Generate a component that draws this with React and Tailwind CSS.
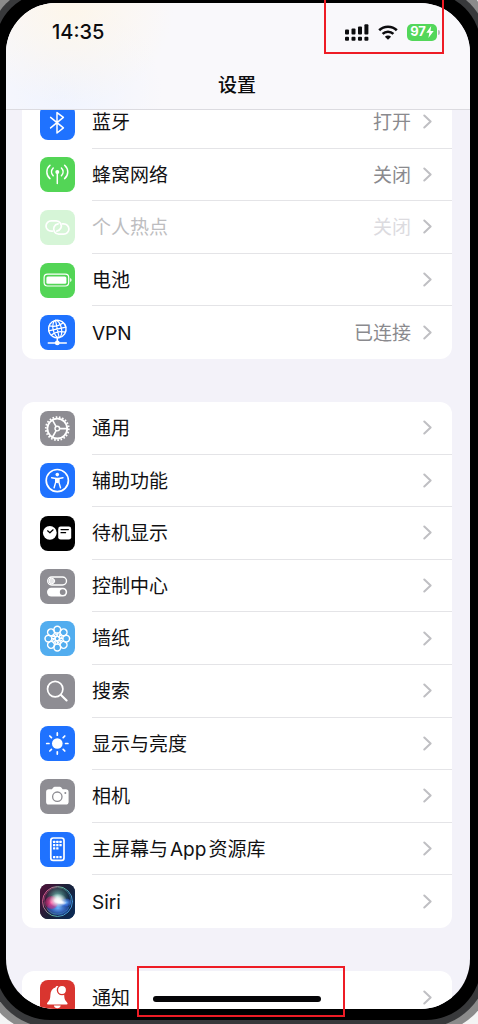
import React from "react";

// Each icon is drawn on a 35x35 tile
const Tile = ({ className, children }) => (
  <svg viewBox="0 0 35 35" className={`size-[35px] shrink-0 rounded-lg ${className}`} fill="none" stroke="white" strokeLinecap="round" strokeLinejoin="round" aria-hidden="true">
    {children}
  </svg>
);

const ANGLES = [0, 45, 90, 135, 180, 225, 270, 315];

const BluetoothIcon = () => (
  <Tile className="bg-[#1f72ff]">
    <path d="M10.6 12.4 23.4 22.9 17 28V7.6l6.4 4.8L10.6 22.9" strokeWidth="1.5" />
  </Tile>
);

const CellularIcon = () => (
  <Tile className="bg-[#53d556]">
    <circle cx="17.3" cy="15" r="2" fill="white" stroke="none" />
    <path d="M17.3 15v11.4M10 8.2c-4.2 3.8-4.2 9.6 0 13.4M24.6 8.2c4.2 3.8 4.2 9.6 0 13.4M13.2 11c-2.2 2.3-2.2 5.5 0 7.8M21.4 11c2.2 2.3 2.2 5.5 0 7.8" strokeWidth="1.5" />
  </Tile>
);

const HotspotIcon = () => (
  <Tile className="bg-[#d6f5d7]">
    <path d="M12.5 21.2h-1.3a5.2 5.2 0 0 1 0-10.4h5a5.2 5.2 0 0 1 4.6 7.4c-.8 1.7-2.2 2.6-4 2.9" strokeWidth="1.7" />
    <path d="M22.3 13.8h1.4a5.2 5.2 0 0 1 0 10.4h-5a5.2 5.2 0 0 1-4.6-7.4c.8-1.7 2.2-2.7 4-2.9" strokeWidth="1.7" />
  </Tile>
);

const BatteryIcon = () => (
  <Tile className="bg-[#53d556]">
    <rect x="4.1" y="11.2" width="24.6" height="11.8" rx="3.4" strokeWidth="1.2" />
    <rect x="6.4" y="13.4" width="20" height="7.4" rx="1.5" fill="white" stroke="none" />
    <path d="M30.2 15.1c1.8.8 1.8 3.2 0 4z" fill="white" stroke="none" />
  </Tile>
);

const VpnIcon = () => (
  <Tile className="bg-[#1f72ff]">
    <g strokeWidth="1.2" transform="rotate(-12 17.3 14)">
      <circle cx="17.3" cy="14" r="8.8" strokeWidth="1.4" />
      <ellipse cx="17.3" cy="14" rx="4.2" ry="8.8" />
      <path d="M17.3 5.2v17.6M8.5 14h17.6M10 9.2c4.4 2 10.2 2 14.6 0M10 18.8c4.4-2 10.2-2 14.6 0" />
    </g>
    <path d="M17.3 23v4M8.3 27.9h18" strokeWidth="1.5" />
    <circle cx="17.3" cy="27.9" r="2.4" fill="white" stroke="none" />
  </Tile>
);

const GeneralIcon = () => (
  <Tile className="bg-[#8e8d93]">
    <circle cx="17.3" cy="17.6" r="11.5" strokeWidth="1.8" strokeLinecap="butt" pathLength="44" strokeDasharray="1 1" />
    <circle cx="17.3" cy="17.6" r="9.9" strokeWidth="1.8" />
    <circle cx="17.3" cy="17.6" r="2.3" strokeWidth="1.4" />
    <path d="M19.8 17.6h7.2M16 15.4 12.5 9.2M16 19.8 12.5 26" strokeWidth="1.6" />
  </Tile>
);

const AccessibilityIcon = () => (
  <Tile className="bg-[#1f72ff]">
    <circle cx="17.3" cy="17.6" r="11.1" strokeWidth="1.7" />
    <circle cx="17.3" cy="11.6" r="1.8" fill="white" stroke="none" />
    <path d="M11.6 14.7l4.2.8h3l4.2-.8" strokeWidth="1.4" />
    <path d="M18.9 15.4v3.8l1.6 5.6M15.7 15.4v3.8l-1.6 5.6" strokeWidth="1.4" />
    <path d="M15.4 15h3.8v4.6l-1.9.6-1.9-.6z" fill="white" stroke="none" />
  </Tile>
);

const StandbyIcon = () => (
  <Tile className="bg-black">
    <circle cx="9.8" cy="16.8" r="6.9" fill="white" stroke="none" />
    <path d="M7.6 14.8l2.3 2 3.2-3" stroke="black" strokeWidth="1.2" />
    <rect x="18.2" y="10.6" width="13" height="13" rx="2.4" fill="white" stroke="none" />
    <path d="M21 13.6h7.4M21 16.7h4.6" stroke="black" strokeWidth="1.2" />
  </Tile>
);

const ControlCenterIcon = () => (
  <Tile className="bg-[#8e8d93]">
    <rect x="7.7" y="8" width="18.8" height="8" rx="4" strokeWidth="1.4" />
    <circle cx="11.8" cy="12" r="2.8" fill="#e6e6e8" strokeWidth="1" />
    <rect x="7" y="18.8" width="20.2" height="8.6" rx="4.3" fill="white" stroke="none" />
    <circle cx="22.7" cy="23.1" r="2.9" fill="#8e8d93" stroke="none" />
  </Tile>
);

const WallpaperIcon = () => (
  <Tile className="bg-[#52adef]">
    {ANGLES.map((a) => (
      <g key={a} transform={`rotate(${a} 17.3 17.6)`} strokeWidth="1.5">
        <circle cx="17.3" cy="8.7" r="3.4" />
        <path d="M17.3 12.1v3.4M15.3 12.9l3.4 2.8" strokeWidth="1.2" />
      </g>
    ))}
    <circle cx="17.3" cy="17.6" r="2.2" strokeWidth="1.2" />
  </Tile>
);

const SearchIcon = () => (
  <Tile className="bg-[#8e8d93]">
    <circle cx="15.2" cy="15.1" r="7.7" strokeWidth="1.7" />
    <path d="M21 20.9l5.6 5.6" strokeWidth="2.1" />
  </Tile>
);

const BrightnessIcon = () => (
  <Tile className="bg-[#1f72ff]">
    <circle cx="17.3" cy="17.5" r="5.3" fill="white" stroke="none" />
    {ANGLES.map((a) => (
      <path key={a} d="M17.3 6.9v2.3" strokeWidth="1.7" transform={`rotate(${a} 17.3 17.5)`} />
    ))}
  </Tile>
);

const CameraIcon = () => (
  <Tile className="bg-[#8e8d93]">
    <path d="M8.8 10.2h3.1l1.4-1.8c.4-.5.9-.7 1.5-.7h5c.6 0 1.1.2 1.5.7l1.4 1.8h3.1c1.7 0 2.8 1.1 2.8 2.7v10c0 1.6-1.1 2.700-2.800 2.700H8.800c-1.700 0-2.700-1.100-2.700-2.700v-10c0-1.600 1-2.700 2.700-2.700z" fill="white" stroke="none" />
    <circle cx="17.3" cy="17.7" r="4.7" stroke="#8e8d93" strokeWidth="1.3" />
    <circle cx="25.3" cy="14" r="1" fill="#8e8d93" stroke="none" />
  </Tile>
);

const HomeScreenIcon = () => (
  <Tile className="bg-[#1f72ff]">
    <rect x="10.8" y="6" width="13.2" height="22.4" rx="2.4" strokeWidth="1.7" />
    <g fill="white" stroke="none">
      {[[13, 8.8], [16.2, 8.8], [19.4, 8.8], [13, 12], [16.2, 12], [19.4, 12], [13, 15.2], [16.2, 15.2], [13, 24], [16.2, 24], [19.4, 24]].map(([x, y]) => (
        <rect key={`${x}-${y}`} x={x} y={y} width="2.3" height="2.3" rx="0.5" />
      ))}
    </g>
  </Tile>
);

const SiriIcon = () => (
  <Tile className="bg-[#17223a]">
    <defs>
      <linearGradient id="siri-bg" x1="0" y1="0.2" x2="1" y2="0.8">
        <stop offset="0" stopColor="#4a1238" />
        <stop offset="0.5" stopColor="#1b2138" />
        <stop offset="1" stopColor="#0b2a55" />
      </linearGradient>
      <linearGradient id="siri-ring" x1="0" y1="0.3" x2="1" y2="0.7">
        <stop offset="0" stopColor="#e0528c" />
        <stop offset="0.5" stopColor="#5fb59a" />
        <stop offset="1" stopColor="#3c8fe0" />
      </linearGradient>
      <radialGradient id="siri-pink">
        <stop offset="0" stopColor="#ff4f9a" />
        <stop offset="1" stopColor="#d02a7a" stopOpacity="0.45" />
      </radialGradient>
      <radialGradient id="siri-blue">
        <stop offset="0" stopColor="#6fb4ff" />
        <stop offset="1" stopColor="#2c66ee" stopOpacity="0.4" />
      </radialGradient>
      <radialGradient id="siri-teal">
        <stop offset="0" stopColor="#9af0e0" stopOpacity="0.8" />
        <stop offset="1" stopColor="#3fae8e" stopOpacity="0" />
      </radialGradient>
      <radialGradient id="siri-glow">
        <stop offset="0" stopColor="white" />
        <stop offset="0.35" stopColor="white" stopOpacity="0.85" />
        <stop offset="1" stopColor="white" stopOpacity="0" />
      </radialGradient>
    </defs>
    <rect width="35" height="35" fill="url(#siri-bg)" stroke="none" />
    <g stroke="none">
      <circle cx="17.5" cy="13" r="12" fill="url(#siri-teal)" />
      <ellipse cx="18" cy="24" rx="11" ry="7.5" fill="url(#siri-blue)" />
      <circle cx="11.5" cy="18.5" r="6.5" fill="url(#siri-pink)" />
      <ellipse cx="26" cy="18.5" rx="5.5" ry="4" fill="url(#siri-blue)" />
      <ellipse cx="18" cy="16.5" rx="9" ry="7" fill="url(#siri-glow)" />
      <ellipse cx="20" cy="18" rx="7" ry="2.5" fill="url(#siri-glow)" transform="rotate(14 20 18)" />
    </g>
    <circle cx="17.5" cy="17.5" r="15" stroke="url(#siri-ring)" strokeWidth="1" />
    <circle cx="17.5" cy="16.8" r="13.4" stroke="url(#siri-ring)" strokeWidth="0.6" opacity="0.7" />
  </Tile>
);

const BellIcon = () => (
  <Tile className="bg-[#d9352f]">
    <path d="M17.3 6c-1 0-1.7.7-1.900 1.600-3.300 1-4.900 3.900-5 7.400-.1 3.500-.6 5-2 6.500-.8.9-1.400 1.500-1.400 2.200 0 .5.400.8 1 .8h18.600c.6 0 1-.3 1-.8 0-.7-.6-1.300-1.400-2.200-1.400-1.500-1.900-3-2-6.500-.1-5-2.500-9-6.900-9z" fill="white" stroke="none" />
    <path d="M13.9 25.6h6.8c-.3 1.700-1.600 2.700-3.400 2.700s-3.100-1-3.400-2.700z" fill="white" stroke="none" />
    <circle cx="22" cy="10" r="4.6" fill="white" stroke="#d9352f" strokeWidth="1.4" />
  </Tile>
);

const network = [
  { id: "bluetooth", label: "蓝牙", value: "打开", Icon: BluetoothIcon },
  { id: "cellular", label: "蜂窝网络", value: "关闭", Icon: CellularIcon },
  { id: "hotspot", label: "个人热点", value: "关闭", Icon: HotspotIcon, disabled: true },
  { id: "battery", label: "电池", Icon: BatteryIcon },
  { id: "vpn", label: "VPN", value: "已连接", Icon: VpnIcon },
];

const general = [
  { id: "general", label: "通用", Icon: GeneralIcon },
  { id: "accessibility", label: "辅助功能", Icon: AccessibilityIcon },
  { id: "standby", label: "待机显示", Icon: StandbyIcon },
  { id: "control", label: "控制中心", Icon: ControlCenterIcon },
  { id: "wallpaper", label: "墙纸", Icon: WallpaperIcon },
  { id: "search", label: "搜索", Icon: SearchIcon },
  { id: "display", label: "显示与亮度", Icon: BrightnessIcon },
  { id: "camera", label: "相机", Icon: CameraIcon },
  { id: "home", label: <>主屏幕与<span className="mx-0.5">App</span>资源库</>, Icon: HomeScreenIcon },
  { id: "siri", label: "Siri", Icon: SiriIcon },
];

const alerts = [{ id: "alerts", label: "通知", Icon: BellIcon }];

const Row = ({ label, value, Icon, disabled, last }) => (
  <li className="flex">
    <a href="#" aria-disabled={disabled} className="flex flex-1 items-center gap-[17px] pl-[18px]">
      <Icon />
      <span className={`flex flex-1 items-center self-stretch pr-5 ${last ? "" : "border-b border-[#e4e4e7]"}`}>
        <span className={`flex-1 pt-[3px] ${disabled ? "text-[#bdbdc0]" : "text-[#111113]"}`}>{label}</span>
        {value && <span className={`pt-[3px] ${disabled ? "text-[#dcdbdf]" : "text-[#8a8a8e]"}`}>{value}</span>}
        <svg viewBox="0 0 9 15" className="ml-3 h-[15px] w-[9px]" fill="none" stroke="#bfbfc3" strokeWidth="2" strokeLinecap="round" strokeLinejoin="round" aria-hidden="true">
          <path d="M1.3 1.5 7.6 7.5 1.3 13.5" />
        </svg>
      </span>
    </a>
  </li>
);

const Group = ({ items, className }) => (
  <ul className={`grid auto-rows-fr rounded-xl bg-white ${className}`}>
    {items.map(({ id, ...item }, i) => (
      <Row key={id} {...item} last={i === items.length - 1} />
    ))}
  </ul>
);

const StatusBar = () => (
  <div className="flex h-[58px] items-center justify-between pl-[46px] pr-[30px]">
    <time className="text-xl font-medium text-[#0c0c0e]">14:35</time>
    <div className="flex items-center gap-[9px]">
      {/* signal, two lines */}
      <svg viewBox="0 0 24 17" className="h-[17px] w-6" fill="#0c0c0e" aria-label="信号">
        <rect x="0" y="5.6" width="4" height="4.8" rx="1" />
        <rect x="6.5" y="4.4" width="4" height="6" rx="1" />
        <rect x="13" y="2.4" width="4" height="8" rx="1" />
        <rect x="19.4" y="0.2" width="4" height="10.2" rx="1" />
        <rect x="0" y="12.7" width="4" height="4" rx="1" />
        <rect x="6.5" y="12.7" width="4" height="4" rx="1" />
        <rect x="13" y="12.7" width="4" height="4" rx="1" />
        <rect x="19.4" y="12.7" width="4" height="4" rx="1" />
      </svg>
      <svg viewBox="0 0 20 15" className="h-[15px] w-5" fill="none" stroke="#0c0c0e" strokeWidth="2.6" aria-label="无线局域网">
        <path d="M1.2 5.3a12.6 12.6 0 0 1 17.6 0M4.6 8.9a7.7 7.7 0 0 1 10.8 0" />
        <path d="M10 14.8 6.9 11.7a4.4 4.4 0 0 1 6.2 0z" fill="#0c0c0e" stroke="none" />
      </svg>
      <div className="flex items-center gap-px">
        <div className="flex h-[17px] w-[30px] items-center justify-center rounded-[5px] bg-[#53d75a] text-[13px] font-bold text-white">
          97
          <svg viewBox="0 0 8 12" className="h-3 w-2" fill="white" aria-hidden="true">
            <path d="M5.2 0 .3 6.700h3L2.400 12l5.300-7H4.500z" />
          </svg>
        </div>
        <span className="h-[5px] w-0.5 rounded-r-full bg-[#b9b9bd]" />
      </div>
    </div>
  </div>
);

export default function App() {
  return (
    <div className="relative flex h-screen flex-col overflow-hidden bg-[#f4f4f4] font-['Inter','Noto_Sans_CJK_SC',sans-serif] text-[19px]">
      {/* metal edge and bezel run past the window on every side */}
      <div className="-mb-[11px] -ml-5 -mr-[18px] -mt-[23px] flex min-h-0 flex-1 rounded-[72px] bg-[#8b8b8b] p-[7px]">
        <div className="flex min-w-0 flex-1 rounded-[66px] bg-[#38393b] p-2">
          <div className="flex min-w-0 flex-1 rounded-[55px] bg-black p-[11px]">
            <main className="relative flex min-w-0 flex-1 flex-col overflow-hidden rounded-[50px] bg-[#f3f2f9]">
              <header className="border-b border-[#dcdbe0] bg-[#f9f8fb] bg-[radial-gradient(circle_at_14%_0%,#fdf6ea,transparent_25%),radial-gradient(circle_at_12%_85%,#f0f4ff,transparent_24%)]">
                <StatusBar />
                <h1 className="flex h-12 items-center justify-center pr-0.5 pt-0.5 text-[19px] font-medium text-[#0c0c0e]">设置</h1>
              </header>

              <div className="flex min-h-0 flex-1 flex-col gap-[43px] overflow-hidden pl-4 pr-[18px]">
                {/* the first group is scrolled a little under the header */}
                <Group items={network} className="-mt-[14px] min-h-[263px] shrink-0" />
                <Group items={general} className="min-h-[526px] shrink-0" />
                <Group items={alerts} className="min-h-[53px] shrink-0" />
              </div>

              <div className="absolute bottom-[7px] left-[147px] h-[6px] w-[168px] rounded-full bg-[#050507]" />
            </main>
          </div>
        </div>
      </div>

      {/* red marks */}
      <div className="absolute -top-1 right-[34px] h-[58px] w-[120px] border-2 border-[#ee1c25]" />
      <div className="absolute bottom-[7px] left-[137px] h-[51px] w-[208px] border-2 border-[#ee1c25]" />
    </div>
  );
}
